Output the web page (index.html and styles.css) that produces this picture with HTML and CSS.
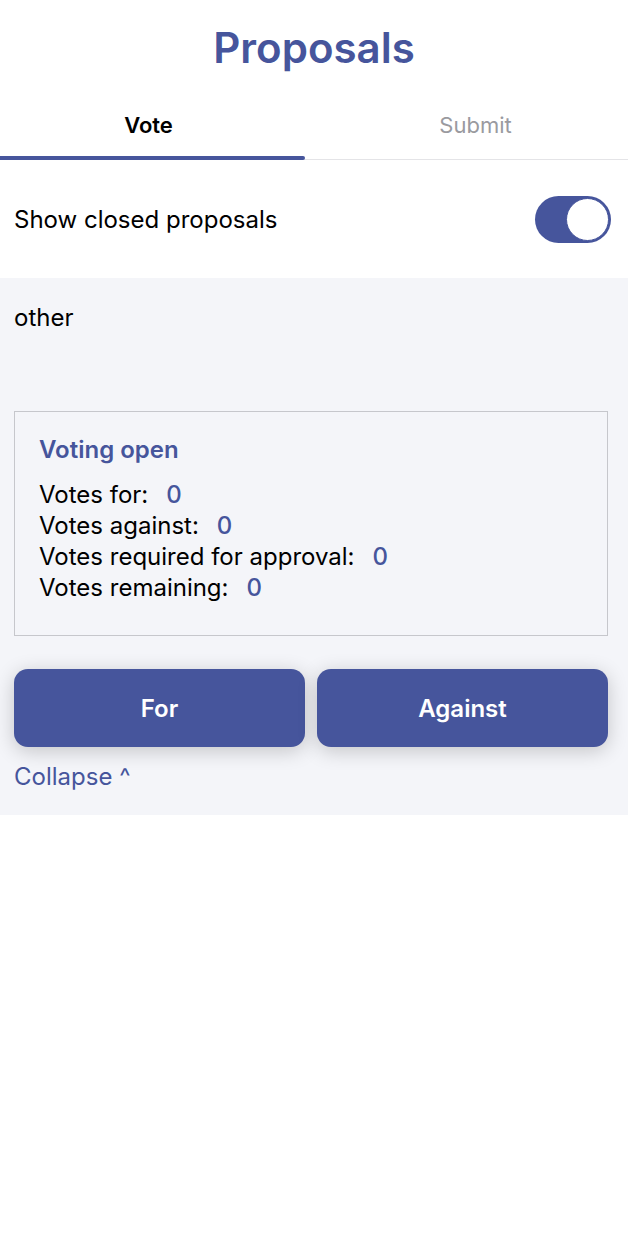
FILE: index.html
```html
<!DOCTYPE html>
<html lang="en">
<head>
<meta charset="utf-8">
<title>Proposals</title>
<link rel="stylesheet" href="styles.css">
</head>
<body>
<div class="screen">
  <header class="header">
    <h1 class="title">Proposals</h1>
  </header>
  <nav class="tabs">
    <div class="tab tab-active">
      <span class="tab-label">Vote</span>
      <span class="tab-indicator"></span>
    </div>
    <div class="tab tab-inactive">
      <span class="tab-label">Submit</span>
    </div>
  </nav>
  <div class="toggle-row">
    <span class="toggle-label">Show closed proposals</span>
    <span class="switch"><span class="switch-thumb"></span></span>
  </div>
  <section class="proposal">
    <p class="proposal-name">other</p>
    <div class="status-card">
      <h2 class="status-title">Voting open</h2>
      <div class="stat"><span class="stat-label">Votes for:</span><span class="stat-value">0</span></div>
      <div class="stat"><span class="stat-label">Votes against:</span><span class="stat-value">0</span></div>
      <div class="stat"><span class="stat-label">Votes required for approval:</span><span class="stat-value">0</span></div>
      <div class="stat"><span class="stat-label">Votes remaining:</span><span class="stat-value">0</span></div>
    </div>
    <div class="actions">
      <button class="vote-btn">For</button>
      <button class="vote-btn">Against</button>
    </div>
    <a class="collapse">Collapse ^</a>
  </section>
</div>
</body>
</html>
```

FILE: styles.css
```css
* { box-sizing: border-box; }
html, body { margin: 0; padding: 0; background: #ffffff; }
body {
  font-family: Inter, "Liberation Sans", sans-serif;
  color: #000;
  width: 628px;
}
.screen { width: 628px; }

.header {
  height: 95px;
  padding-top: 23px;
  text-align: center;
}
.title {
  margin: 0;
  font-size: 42px;
  line-height: 50px;
  font-weight: 600;
  color: #46559c;
}

.tabs {
  display: grid;
  grid-template-columns: 305px 1fr;
  height: 65px;
  border-bottom: 1px solid #e4e4e7;
}
.tab {
  position: relative;
  display: flex;
  align-items: center;
  justify-content: center;
  height: 64px;
  padding-bottom: 4px;
  font-size: 22px;
}
.tab-active { padding-right: 8px; font-weight: 600; color: #000; }
.tab-inactive { padding-left: 18px; color: #9a9a9f; font-weight: 400; }
.tab-indicator {
  position: absolute;
  left: 0;
  right: 0;
  bottom: -1px;
  height: 4px;
  border-radius: 0 2px 2px 0;
  background: #46559c;
}

.toggle-row {
  height: 118px;
  display: flex;
  align-items: center;
  justify-content: space-between;
  padding: 0 17px 0 14px;
}
.toggle-label { font-size: 24px; }
.switch {
  display: flex;
  align-items: center;
  justify-content: flex-end;
  width: 76px;
  height: 47px;
  border-radius: 24px;
  background: #46559c;
  padding: 2px;
}
.switch-thumb {
  width: 43px;
  height: 43px;
  border-radius: 50%;
  background: #ffffff;
  border: 1.5px solid #46559c;
}

.proposal {
  background: #f4f5f9;
  padding: 26px 20px 24px 14px;
}
.proposal-name {
  margin: 0;
  font-size: 24px;
  line-height: 28px;
}
.status-card {
  margin-top: 79px;
  border: 1px solid #c6c7cc;
  padding: 23px 24px 32px 24px;
  height: 225px;
}
.status-title {
  margin: 0 0 14px 0;
  font-size: 24px;
  line-height: 30px;
  font-weight: 600;
  color: #46559c;
}
.stat {
  display: flex;
  font-size: 24px;
  line-height: 31px;
}
.stat-label { margin-right: 18px; }
.stat-value { color: #46559c; font-weight: 500; }

.actions {
  display: grid;
  grid-template-columns: 1fr 1fr;
  gap: 12px;
  margin-top: 33px;
}
.vote-btn {
  height: 78px;
  border: none;
  border-radius: 14px;
  background: #46559c;
  color: #ffffff;
  font-family: inherit;
  font-size: 24px;
  font-weight: 600;
  box-shadow: 0 4px 20px rgba(0, 0, 0, 0.2);
}
.collapse {
  display: block;
  margin-top: 16px;
  font-size: 24px;
  line-height: 28px;
  color: #46559c;
}
```
